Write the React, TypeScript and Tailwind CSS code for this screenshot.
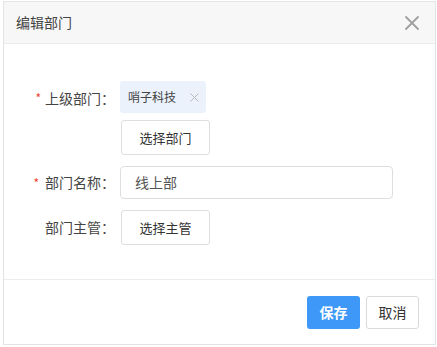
import React from "react";

export default function App() {
  const font = { fontFamily: '"Noto Sans CJK SC", "Noto Sans", sans-serif' };
  return (
    <div className="w-[437px] h-[347px] bg-white relative" style={font}>
      <div className="absolute left-[3px] top-[1px] w-[433px] h-[344px] border border-[#e4e4e4] bg-white flex flex-col">
        <div className="h-[42px] bg-[#f7f7f7] border-b border-[#ebebeb] flex items-center justify-between pl-[12px] pr-[16px] shrink-0">
          <span className="text-[14px] text-[#444]">编辑部门</span>
          <svg width="14" height="14" viewBox="0 0 14 14">
            <path d="M1 1L13 13M13 1L1 13" stroke="#a0a0a0" strokeWidth="1.8" strokeLinecap="round" />
          </svg>
        </div>
        <div className="flex-1 pt-[37px]">
          <div className="flex">
            <div className="w-[116px] flex justify-end items-start pt-[7px] pr-[5px] text-[14px] text-[#444]">
              <span className="text-[#f04134] text-[12px] mr-[4px] mt-[1px]">*</span>
              <span>上级部门：</span>
            </div>
            <div className="flex flex-col gap-[7px]">
              <div className="w-[86px] h-[32px] bg-[#ebf2fc] rounded-[3px] flex items-center pl-[8px] text-[12px] text-[#444]">
                <span>哨子科技</span>
                <svg className="ml-[14px]" width="9" height="9" viewBox="0 0 9 9">
                  <path d="M0.5 0.5L8.5 8.5M8.5 0.5L0.5 8.5" stroke="#b8b8b8" strokeWidth="1" />
                </svg>
              </div>
              <div className="w-[89px] h-[35px] border border-[#dedede] rounded-[3px] bg-white flex items-center justify-center text-[13px] text-[#333] ml-[1px]">
                选择部门
              </div>
            </div>
          </div>
          <div className="flex mt-[11px] items-center">
            <div className="w-[116px] flex justify-end items-center pr-[5px] text-[14px] text-[#444]">
              <span className="text-[#f04134] text-[12px] mr-[6px]">*</span>
              <span>部门名称：</span>
            </div>
            <div className="w-[273px] h-[33px] border border-[#dedede] rounded-[4px] flex items-center pl-[14px] text-[14px] text-[#555]">
              线上部
            </div>
          </div>
          <div className="flex mt-[11px] items-center">
            <div className="w-[116px] flex justify-end items-center pr-[5px] text-[14px] text-[#444]">
              <span>部门主管：</span>
            </div>
            <div className="w-[89px] h-[35px] border border-[#dedede] rounded-[3px] bg-white flex items-center justify-center text-[13px] text-[#333] ml-[1px]">
              选择主管
            </div>
          </div>
        </div>
        <div className="h-[65px] border-t border-[#ececec] flex items-center justify-end gap-[6px] pr-[16px] shrink-0">
          <div className="w-[53px] h-[33px] bg-[#3d98f7] rounded-[3px] flex items-center justify-center text-white text-[14px] font-bold">
            保存
          </div>
          <div className="w-[53px] h-[33px] bg-white border border-[#dadada] rounded-[3px] flex items-center justify-center text-[#333] text-[14px]">
            取消
          </div>
        </div>
      </div>
    </div>
  );
}
